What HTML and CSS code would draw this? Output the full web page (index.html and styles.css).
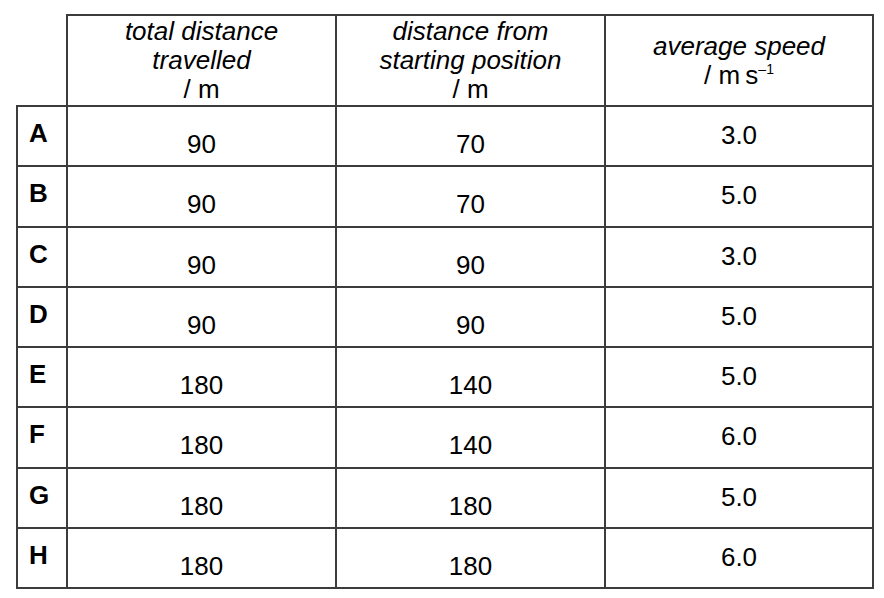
FILE: index.html
```html
<!DOCTYPE html>
<html>
<head>
<meta charset="utf-8">
<link rel="stylesheet" href="styles.css">
</head>
<body>
<table class="data">
  <colgroup>
    <col class="c-label">
    <col class="c-total">
    <col class="c-dist">
    <col class="c-speed">
  </colgroup>
  <thead>
    <tr class="head-row">
      <th class="corner"></th>
      <th class="head">total distance<br>travelled<br><span class="unit">/ m</span></th>
      <th class="head">distance from<br>starting position<br><span class="unit">/ m</span></th>
      <th class="head">average speed<br><span class="unit">/ m&#8201;s<sup class="sup">&ndash;1</sup></span></th>
    </tr>
  </thead>
  <tbody>
    <tr><th class="label">A</th><td class="val">90</td><td class="val">70</td><td class="speed">3.0</td></tr>
    <tr><th class="label">B</th><td class="val">90</td><td class="val">70</td><td class="speed">5.0</td></tr>
    <tr><th class="label">C</th><td class="val">90</td><td class="val">90</td><td class="speed">3.0</td></tr>
    <tr><th class="label">D</th><td class="val">90</td><td class="val">90</td><td class="speed">5.0</td></tr>
    <tr><th class="label">E</th><td class="val">180</td><td class="val">140</td><td class="speed">5.0</td></tr>
    <tr><th class="label">F</th><td class="val">180</td><td class="val">140</td><td class="speed">6.0</td></tr>
    <tr><th class="label">G</th><td class="val">180</td><td class="val">180</td><td class="speed">5.0</td></tr>
    <tr><th class="label">H</th><td class="val">180</td><td class="val">180</td><td class="speed">6.0</td></tr>
  </tbody>
</table>
</body>
</html>
```
FILE: styles.css
```css
html, body {
  background: #ffffff;
}
body {
  margin: 0;
  font-family: "Liberation Sans", Arial, sans-serif;
  color: #000;
}
.data {
  border-collapse: collapse;
  table-layout: fixed;
  margin: 14px 0 0 16px;
  width: 856px;
}
.c-label { width: 50px; }
.c-total { width: 269px; }
.c-dist { width: 269px; }
.c-speed { width: 268px; }

.data th,
.data td {
  border: 2px solid #3c3c3c;
  padding: 0;
  font-size: 26px;
}
.data .corner {
  border-top: none;
  border-left: none;
}
.head-row {
  height: 91px;
}
.data .head {
  font-weight: normal;
  font-style: italic;
  line-height: 29px;
  text-align: center;
  vertical-align: middle;
  padding: 0;
}
.unit {
  font-style: normal;
}
.sup {
  font-size: 14px;
  vertical-align: 10px;
  line-height: 0;
}
.data tbody tr {
  height: 60.3px;
}
.data .label {
  font-weight: bold;
  text-align: left;
  vertical-align: top;
  padding: 11px 0 0 11px;
}
.data .val {
  text-align: center;
  vertical-align: top;
  padding-top: 22px;
}
.data .speed {
  text-align: center;
  vertical-align: top;
  padding-top: 13px;
}
```
